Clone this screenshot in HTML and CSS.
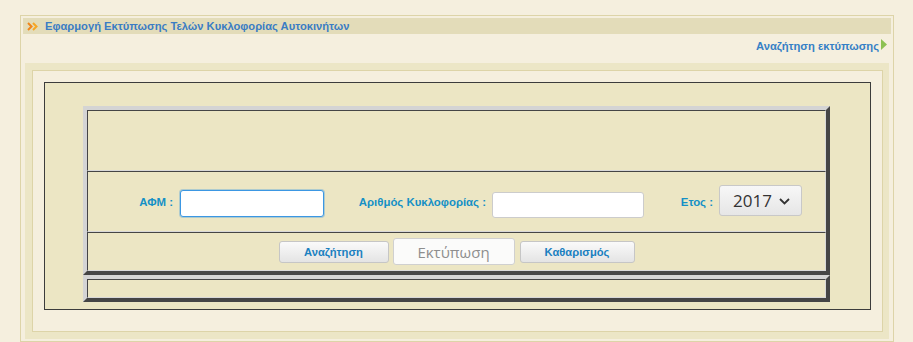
FILE: index.html
```html
<!DOCTYPE html>
<html lang="el">
<head>
    <meta charset="UTF-8">
    <title>Εφαρμογή Εκτύπωσης Τελών Κυκλοφορίας Αυτοκινήτων</title>
    <link rel="stylesheet" href="styles.css">
</head>
<body>
    <div class="frame">
        <div class="titlebar">
            <svg class="title-icon" width="11" height="9" viewBox="0 0 11 9">
                <polyline points="1,1 4.5,4.5 1,8" fill="none" stroke="#f0861a" stroke-width="2"/>
                <polyline points="6,1 9.5,4.5 6,8" fill="none" stroke="#f6a623" stroke-width="2"/>
            </svg>
            <span class="title">Εφαρμογή Εκτύπωσης Τελών Κυκλοφορίας Αυτοκινήτων</span>
        </div>

        <div class="crumbs">
            <a class="crumb-link" href="#">Αναζήτηση εκτύπωσης</a>
            <svg class="crumb-arrow" width="6" height="11" viewBox="0 0 6 11">
                <polygon points="0,0 6,5.5 0,11" fill="#8cc152"/>
            </svg>
        </div>

        <div class="band">
            <div class="panel">
                <div class="dark-box">
                    <!-- φόρμα αναζήτησης -->
                    <div class="outset">
                        <div class="cell cell-empty"></div>
                        <div class="cell cell-fields">
                            <label class="lbl lbl-afm" for="afm">ΑΦΜ :</label>
                            <input class="field field-afm" type="text" id="afm" autofocus>
                            <label class="lbl lbl-plate" for="plate">Αριθμός Κυκλοφορίας :</label>
                            <input class="field field-plate" type="text" id="plate">
                            <label class="lbl lbl-year">Ετος :</label>
                            <div class="year-select">
                                <span>2017</span>
                                <svg width="11" height="7" viewBox="0 0 11 7">
                                    <polyline points="1,1 5.5,5.5 10,1" fill="none" stroke="#333" stroke-width="1.8"/>
                                </svg>
                            </div>
                        </div>
                        <div class="cell cell-actions">
                            <button class="btn">Αναζήτηση</button>
                            <button class="btn btn-print" disabled>Εκτύπωση</button>
                            <button class="btn btn-clear">Καθαρισμός</button>
                        </div>
                    </div>

                    <!-- αποτελέσματα -->
                    <div class="outset">
                        <div class="cell cell-results"></div>
                    </div>
                </div>
            </div>
        </div>
    </div>
</body>
</html>
```

FILE: styles.css
```css
* {
    margin: 0;
    padding: 0;
    box-sizing: border-box;
}
body {
    font-family: 'Liberation Sans', Arial, sans-serif;
    background: #f5efde;
    overflow: hidden;
}
.frame {
    margin: 15px 0 0 20px;
    width: 874px;
    border: 1px solid #ddd4a8;
    padding: 2px;
}
.titlebar {
    height: 16px;
    background: #e3dcb9;
    display: flex;
    align-items: center;
    padding-left: 4px;
}
.title-icon {
    margin-right: 7px;
}
.title {
    color: #3a7cc4;
    font-size: 11.2px;
    font-weight: bold;
}
.crumbs {
    height: 29px;
    display: flex;
    justify-content: flex-end;
    align-items: flex-start;
    padding: 5px 4px 0 0;
}
.crumb-link {
    color: #3580c6;
    font-size: 11.2px;
    font-weight: bold;
    text-decoration: none;
    line-height: 14px;
    margin-right: 2px;
}
.band {
    margin: 0 2px;
    background: #ece6c6;
    padding: 7px 6px 7px 7px;
}
.panel {
    border: 1px solid #ddd4a8;
    background: #f5efde;
    padding: 11px 11px 21px 11px;
}
.dark-box {
    border: 1px solid #3c3c3c;
    background: #ece6c4;
    padding: 23px 40px 7px 38px;
}
.outset {
    width: 747px;
    border-style: solid;
    border-width: 4px;
    border-color: #d4d4d4 #454545 #454545 #d4d4d4;
}
.cell {
    border-style: solid;
    border-width: 1px;
    border-color: #454545 #d8d8d8 #d8d8d8 #454545;
}
.cell-empty {
    height: 61px;
}
.cell-fields {
    height: 61px;
    display: flex;
    align-items: flex-start;
}
.lbl {
    color: #1590c6;
    font-size: 11.4px;
    font-weight: bold;
    line-height: 14px;
    text-align: right;
    margin-top: 23px;
}
.lbl-afm {
    width: 92px;
    padding-right: 7px;
}
.lbl-plate {
    width: 168px;
    padding-right: 6px;
}
.lbl-year {
    width: 75px;
    padding-right: 6px;
}
.field {
    background: #fff;
    border: 1px solid #ccc;
    border-radius: 3px;
    font-size: 14px;
    padding: 0 8px;
    outline: none;
    caret-color: #222;
}
.field-afm {
    width: 144px;
    height: 27px;
    margin-top: 18px;
    border-color: #3b97e3;
    box-shadow: 0 0 0 1px rgba(59, 151, 227, 0.35);
}
.field-plate {
    width: 152px;
    height: 26px;
    margin-top: 20px;
}
.year-select {
    width: 83px;
    height: 31px;
    margin-top: 13px;
    display: flex;
    align-items: center;
    gap: 7px;
    padding-left: 13px;
    border: 1px solid #c8c8c8;
    border-radius: 3px;
    background: linear-gradient(#f7f7f7, #e6e6e6);
    font-family: 'Open Sans', sans-serif;
    font-size: 17px;
    color: #333;
}
.year-select svg {
    margin-top: 1px;
}
.cell-actions {
    height: 39px;
    display: flex;
    justify-content: center;
    align-items: center;
}
.btn {
    width: 110px;
    height: 22px;
    border: 1px solid #c6c6c6;
    border-radius: 3px;
    background: linear-gradient(#fafafa, #e4e4e4);
    color: #1a80c0;
    font-family: 'Liberation Sans', Arial, sans-serif;
    font-size: 11.2px;
    font-weight: bold;
}
.btn-print {
    width: 122px;
    height: 27px;
    margin: 0 5px 0 4px;
    background: #fbfbfa;
    border-color: #d0d0d0;
    color: #8e8e8e;
    font-family: 'Open Sans', sans-serif;
    font-size: 15px;
    font-weight: normal;
}
.btn-clear {
    width: 115px;
}
.cell-results {
    height: 19px;
}
```
